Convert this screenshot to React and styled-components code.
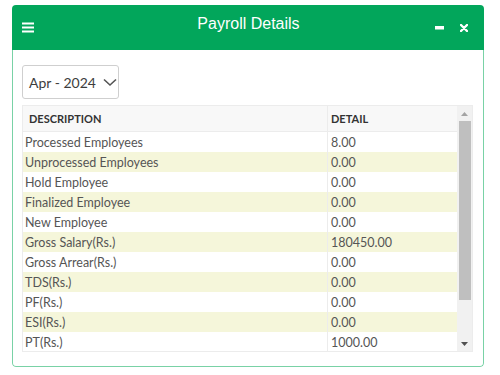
import React from "react";
import styled, { createGlobalStyle } from "styled-components";

const Global = createGlobalStyle`
  body {
    margin: 0;
    background: #ffffff;
    font-family: Lato, "Noto Sans", sans-serif;
  }
`;

const Page = styled.div`
  padding: 5px 16px 0 12px;
`;

const Panel = styled.div`
  width: 472px;
  border-radius: 4px;
  overflow: hidden;
`;

const Header = styled.div`
  height: 45px;
  background: #02a65b;
  display: flex;
  align-items: flex-start;
  justify-content: space-between;
  padding: 0 16px 0 10px;
  box-sizing: border-box;
  color: #ffffff;
`;

const IconButton = styled.div`
  display: flex;
  align-items: center;
  margin-top: ${(p) => p.top || 17}px;
  gap: ${(p) => p.gap || 0}px;
`;

const Title = styled.div`
  font-family: "Liberation Sans", Arial, sans-serif;
  font-size: 16px;
  margin-top: 10px;
  margin-left: 28px;
`;

const Body = styled.div`
  border: 1px solid #79d2a6;
  border-top: none;
  border-radius: 0 0 4px 4px;
  padding: 15px 10px 14px 9px;
  background: #ffffff;
`;

const Select = styled.div`
  width: 97px;
  height: 34px;
  box-sizing: border-box;
  border: 1px solid #cfcfcf;
  border-radius: 3px;
  display: flex;
  align-items: center;
  padding-left: 6px;
  gap: 7px;
  font-size: 14px;
  color: #3d3d3d;
  white-space: nowrap;
  margin-bottom: 6px;
`;

const Grid = styled.div`
  height: 247px;
  display: flex;
  border: 1px solid #ececec;
  box-sizing: border-box;
  overflow: hidden;
`;

const Table = styled.table`
  width: 435px;
  border-collapse: collapse;
  font-size: 12.5px;
  color: #555;
  table-layout: fixed;
`;

const Scrollbar = styled.div`
  width: 15px;
  background: #f1f1f1;
  display: flex;
  flex-direction: column;
  align-items: center;
`;

const Arrow = styled.div`
  height: 15px;
  display: flex;
  align-items: center;
  justify-content: center;
`;

const Thumb = styled.div`
  width: 12px;
  height: 179px;
  background: #bfbfbf;
`;

const Spacer = styled.div`
  flex: 1;
`;

const Th = styled.th`
  text-align: left;
  font-weight: 700;
  font-size: 11px;
  color: #333;
  background: #f8f8f8;
  height: 25px;
  padding: 0 0 0 ${(p) => p.pad}px;
  border-bottom: 1px solid #ececec;
  border-left: ${(p) => (p.divider ? "1px solid #ececec" : "none")};
  width: ${(p) => p.w || "auto"};
`;

const Tr = styled.tr`
  background: ${(p) => (p.alt ? "#f5f6da" : "#ffffff")};
`;

const Td = styled.td`
  height: 20px;
  padding: 0 0 0 ${(p) => p.pad}px;
  border-left: ${(p) => (p.divider ? "1px solid #ececec" : "none")};
  white-space: nowrap;
`;

const rows = [
  ["Processed Employees", "8.00"],
  ["Unprocessed Employees", "0.00"],
  ["Hold Employee", "0.00"],
  ["Finalized Employee", "0.00"],
  ["New Employee", "0.00"],
  ["Gross Salary(Rs.)", "180450.00"],
  ["Gross Arrear(Rs.)", "0.00"],
  ["TDS(Rs.)", "0.00"],
  ["PF(Rs.)", "0.00"],
  ["ESI(Rs.)", "0.00"],
  ["PT(Rs.)", "1000.00"],
];

const Menu = () => (
  <svg width="12" height="11" viewBox="0 0 12 11">
    <rect x="0" y="0.5" width="12" height="2" fill="#fff" />
    <rect x="0" y="4.5" width="12" height="2" fill="#fff" />
    <rect x="0" y="8.5" width="12" height="2" fill="#fff" />
  </svg>
);

export default function App() {
  return (
    <Page>
      <Global />
      <Panel>
        <Header>
          <IconButton>
            <Menu />
          </IconButton>
          <Title>Payroll Details</Title>
          <IconButton gap={16} top={19}>
            <svg width="9" height="4" viewBox="0 0 9 4">
              <rect width="9" height="3.5" fill="#fff" />
            </svg>
            <svg width="8" height="8" viewBox="0 0 8 8">
              <path d="M1 1 L7 7 M7 1 L1 7" stroke="#fff" strokeWidth="2.4" strokeLinecap="round" />
            </svg>
          </IconButton>
        </Header>
        <Body>
          <Select>
            Apr - 2024
            <svg width="14" height="9" viewBox="0 0 14 9">
              <path d="M1 1.5 L7 7 L13 1.5" fill="none" stroke="#555" strokeWidth="1.6" />
            </svg>
          </Select>
          <Grid>
            <Table>
              <thead>
                <tr>
                  <Th pad={6} w="298px">DESCRIPTION</Th>
                  <Th pad={3} divider>DETAIL</Th>
                </tr>
              </thead>
              <tbody>
                {rows.map(([d, v], i) => (
                  <Tr key={d} alt={i % 2 === 1}>
                    <Td pad={2}>{d}</Td>
                    <Td pad={3} divider>{v}</Td>
                  </Tr>
                ))}
              </tbody>
            </Table>
            <Scrollbar>
              <Arrow>
                <svg width="7" height="4" viewBox="0 0 7 4">
                  <path d="M0 4 L3.5 0 L7 4 Z" fill="#a3a3a3" />
                </svg>
              </Arrow>
              <Thumb />
              <Spacer />
              <Arrow>
                <svg width="7" height="4" viewBox="0 0 7 4">
                  <path d="M0 0 L3.5 4 L7 0 Z" fill="#505050" />
                </svg>
              </Arrow>
            </Scrollbar>
          </Grid>
        </Body>
      </Panel>
    </Page>
  );
}
